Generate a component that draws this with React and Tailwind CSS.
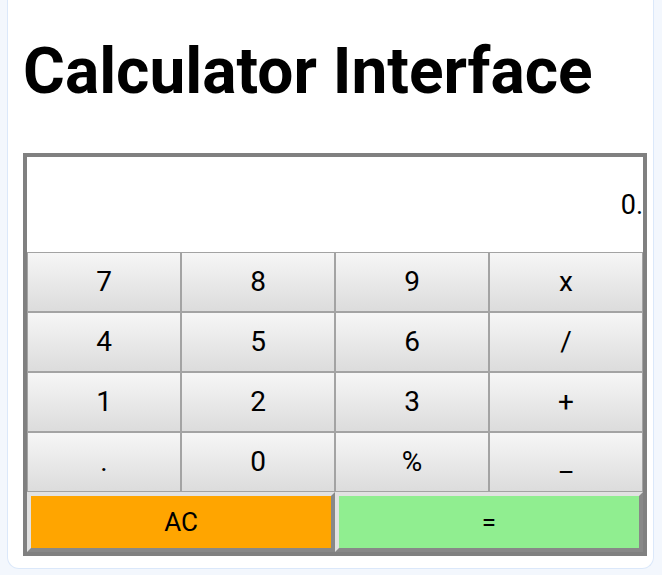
const keys = ["7", "8", "9", "x", "4", "5", "6", "/", "1", "2", "3", "+", ".", "0", "%", "_"];

function Key({ label }) {
  return (
    <button className="h-[60px] border border-[#a3a3a3] bg-gradient-to-b from-[#f6f6f6] to-[#dcdcdc] text-[28px] leading-none text-black">
      {label}
    </button>
  );
}

export default function App() {
  return (
    <div className="h-[575px] overflow-hidden bg-[#f3f7fd] pl-[7px] pr-[8px] font-['Roboto',sans-serif]">
      <div className="h-[569px] rounded-b-xl border-x border-b border-[#dbe8fa] bg-white pl-[15px]">
        <h1 className="pt-[40px] text-[64px] font-bold leading-none text-black">Calculator Interface</h1>
        <div className="mt-[49px] w-[624px] border-4 border-[#808080]">
          <div className="flex h-[95px] items-center justify-end overflow-hidden bg-white pt-[2px] text-[27px] text-black">
            0.
          </div>
          <div className="grid grid-cols-4">
            {keys.map((k) => (
              <Key key={k} label={k} />
            ))}
            <button className="col-span-2 h-[60px] border-4 border-t-[#e2e2e2] border-l-[#e2e2e2] border-r-[#888888] border-b-[#888888] bg-[#ffa500] text-[26px] text-black">
              AC
            </button>
            <button className="col-span-2 h-[60px] border-4 border-t-[#e2e2e2] border-l-[#e2e2e2] border-r-[#888888] border-b-[#888888] bg-[#90ee90] text-[26px] text-black">
              =
            </button>
          </div>
        </div>
      </div>
    </div>
  );
}
